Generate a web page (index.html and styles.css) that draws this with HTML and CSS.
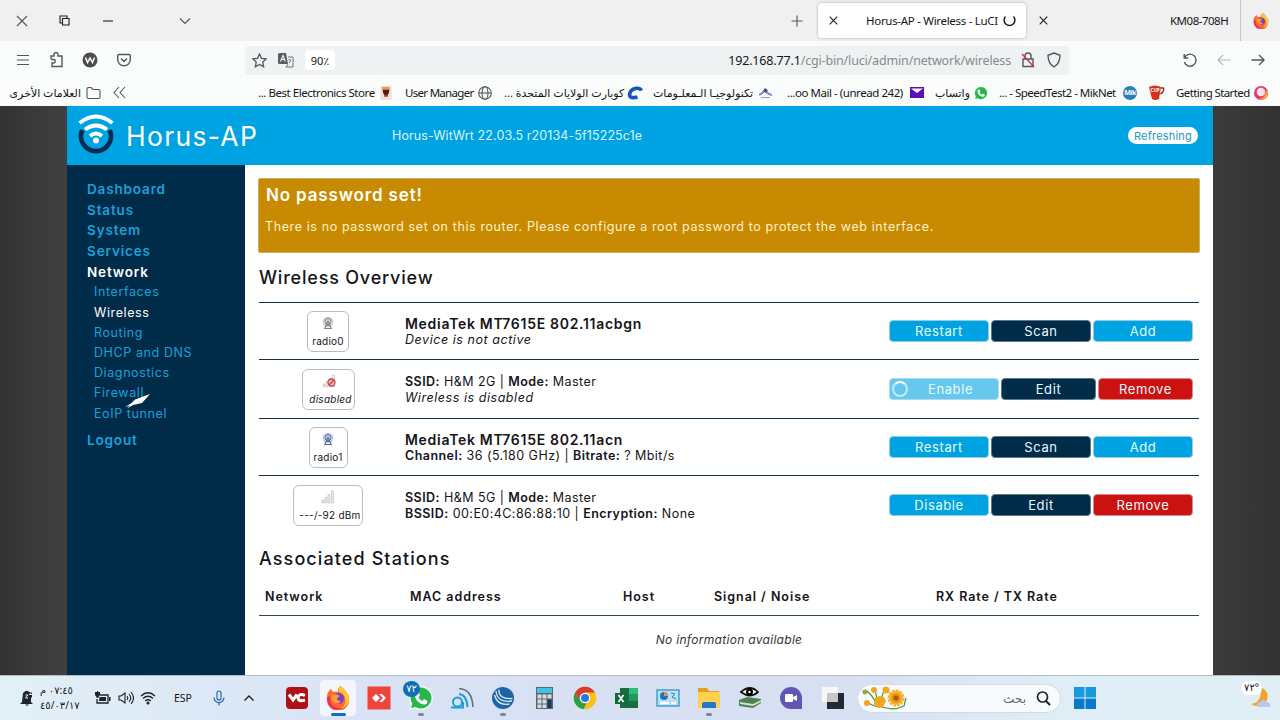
FILE: index.html
```html
<!DOCTYPE html>
<html lang="en">

<head>
  <meta charset="UTF-8">
  <meta name="viewport" content="width=device-width, initial-scale=1.0">
  <title>Horus-AP - Wireless - LuCI</title>
  <link rel="stylesheet" href="styles.css">
</head>

<body>
  <div class="tabs">
    <svg class="line" width="12" height="12" viewBox="0 0 12 12"><path d="M1 1l10 10M11 1L1 11"/></svg>
    <svg class="line dark" width="11" height="11" viewBox="0 0 11 11"><path d="M3 8H1V1h7v2M3.500 3.500h6.500v6.500H3.500z"/></svg>
    <svg class="line dark" width="10" height="10" viewBox="0 0 10 10"><path d="M0 5h10"/></svg>
    <svg class="line" width="12" height="12" viewBox="0 0 12 12"><path d="M1 3.500l5 5 5-5"/></svg>
    <svg class="line" width="12" height="12" viewBox="0 0 12 12"><path d="M6 0.500v11M0.500 6h11"/></svg>
    <div class="tab">
      <svg class="line dark" width="9" height="9" viewBox="0 0 9 9"><path d="M.7.7l7.600 7.600M8.300.7L.7 8.300"/></svg>
      <span class="tab-title">Horus-AP - Wireless - LuCI</span>
      <svg class="line dark" width="13" height="13" viewBox="0 0 13 13"><path stroke-width="1.500" d="M2.500 2.500A5.400 5.400 0 1 0 10.500 2.500"/></svg>
    </div>
    <svg class="line dark" width="9" height="9" viewBox="0 0 9 9"><path d="M.7.7l7.600 7.600M8.300.7L.7 8.300"/></svg>
    <span class="tab-other">KM08-708H</span>
    <i class="tab-line"></i>
    <svg width="16" height="16" viewBox="0 0 24 24"><use href="#firefox"/></svg>
  </div>

  <div class="toolbar">
    <svg class="line" width="14" height="14" viewBox="0 0 14 14"><path d="M1 2.500h12M1 7h12M1 11.500h12"/></svg>
    <svg class="line" width="15" height="16" viewBox="0 0 15 16"><path stroke-width="1.400" d="M2 7V4h3V2.500a1.500 1.500 0 0 1 4 0V4h4v10.500H3V11h1.500a1.600 1.600 0 0 0 0-3.500H2"/></svg>
    <svg width="16" height="16" viewBox="0 0 16 16"><circle cx="8" cy="8" r="7.500" fill="#4b4c4e"/><path d="M3.500 5.500l2 5L8 6l2.500 4.500 2-5" fill="none" stroke="#fff" stroke-width="1.500"/></svg>
    <svg class="line" width="14" height="14" viewBox="0 0 14 14"><path stroke-width="1.400" d="M2 1.500h10q1.300 0 1.300 1.300V6.500a6.200 6.200 0 0 1-12.600 0V2.800Q.7 1.500 2 1.500zM4 5.500l3 3 3-3"/></svg>
    <div class="urlbar">
      <svg class="line" width="15" height="15" viewBox="0 0 15 15"><path stroke-width="1.300" d="M7.500 1l2 4.300 4.700.6-3.400 3.200.8 4.600-4.100-2.200-4.100 2.200.8-4.600L.8 5.900l4.700-.6z"/></svg>
      <svg width="16" height="15" viewBox="0 0 16 15"><path d="M1.500 0H8l2 11H1.500Q0 11 0 9.500v-8Q0 0 1.500 0z" fill="#5b5c60"/><path d="M2.500 8.500L5 2.500l2.300 6M3.500 6.500h3" fill="none" stroke="#eee" stroke-width="1.200"/><path d="M10 4h5v10H8l2-3M10.500 7q2-1.500 2 0t-1 2v1" fill="none" stroke="#74757a"/></svg>
      <span class="zoom">90٪</span>
      <span class="url">192.168.77.1<span class="path">/cgi-bin/luci/admin/network/wireless</span></span>
      <svg class="line" width="14" height="16" viewBox="0 0 14 16"><path stroke-width="1.400" d="M2 7h10v7.500H2zM4 7V4a3 3 0 0 1 6 0v3"/><path class="strike" d="M1 2l12 13"/></svg>
      <svg class="line" width="14" height="16" viewBox="0 0 14 16"><path stroke-width="1.400" d="M7 1l6 2.300c0 5-1 8.700-6 11.700C2 12 1 8.300 1 3.300z"/></svg>
    </div>
    <svg class="line" width="14" height="14" viewBox="0 0 14 14"><path stroke-width="1.400" d="M1.200 1v4h4M1.500 4.800A6 6 0 1 1 1.300 9"/></svg>
    <svg class="line pale" width="14" height="14" viewBox="0 0 14 14"><path d="M13.500 7H1M6 2L1 7l5 5"/></svg>
    <svg class="line" width="14" height="14" viewBox="0 0 14 14"><path stroke-width="1.400" d="M.5 7H13M8 2l5 5-5 5"/></svg>
  </div>

  <div class="bookmarks">
    <span class="mark" dir="rtl">العلامات الأخرى</span>
    <svg class="line" width="15" height="14" viewBox="0 0 15 14"><path d="M1 11V3q0-1.500 1.500-1.500H5l2 2h5.500Q14 3.500 14 5v6q0 1.500-1.500 1.500h-10Q1 12.500 1 11z"/></svg>
    <svg class="line" width="13" height="13" viewBox="0 0 13 13"><path d="M6 1L1 6.500 6 12M12 1L7 6.500l5 5.500"/></svg>
    <div class="mark"><span>... Best Electronics Store</span><svg width="12" height="14" viewBox="0 0 12 15"><path fill="#f0e0d8" d="M0 0h12v15H0z"/><path fill="#e79b52" d="M2 1h8v4H2z"/><path fill="#4b1f1b" d="M2.500 4h7q0 6-3.500 6T2.500 4z"/><path fill="#c43422" d="M4 9.500h4v2H4z"/></svg></div>
    <div class="mark"><span>User Manager</span><svg class="line" width="14" height="14" viewBox="0 0 14 14"><circle cx="7" cy="7" r="6.300"/><ellipse cx="7" cy="7" rx="3" ry="6.300"/><path d="M1 7h12"/></svg></div>
    <div class="mark"><span dir="rtl">كوبارت الولايات المتحدة ...</span><svg width="16" height="14" viewBox="0 0 16 14"><path d="M14.500 4.500Q13 1.800 9 2.300 3 3.500 2.500 9q.5 4 8 2" fill="none" stroke="#1556c0" stroke-width="3.600"/></svg></div>
    <div class="mark"><span dir="rtl">تكنولوجيـا الـمعلـومات</span><svg width="13" height="12" viewBox="0 0 13 12"><path d="M0 8q4-2 6-5 2 4 7 5" fill="none" stroke="#8a84cc" stroke-width="2"/><circle cx="6.500" cy="3.500" r="2" fill="#4f4a91"/><path d="M2 10.500h9" stroke="#9b98d8"/></svg></div>
    <div class="mark"><span>...oo Mail - (unread 242)</span><svg width="14" height="11" viewBox="0 0 14 11"><path fill="#5b10b5" d="M0 0h14v11H0z"/><path fill="#fff" d="M1 1.500h12L7 6z"/></svg></div>
    <div class="mark"><span dir="rtl">واتساب</span><svg width="14" height="14" viewBox="0 0 24 24"><use href="#whatsapp"/></svg></div>
    <div class="mark"><span>... - SpeedTest2 - MikNet</span><span class="mik">Mik</span></div>
    <svg width="16" height="16" viewBox="0 0 16 16"><path fill="#d8301f" d="M0 2q6-3 12 0l-2 12q-4 2-7 0z"/><path fill="none" stroke="#87322c" stroke-width="1.300" d="M12 3h2.500q1 4-3.500 6"/><text x="1.500" y="7" class="cup">CUP</text></svg>
    <div class="mark"><span>Getting Started</span><svg width="14" height="14" viewBox="0 0 14 14"><circle cx="7" cy="7" r="7" fill="#e8366e"/><path fill="#ff9d2e" d="M13 3a7 7 0 0 1-9 10q7 0 9-10z"/><circle cx="7" cy="6" r="4.300" fill="#fbe4ef"/></svg></div>
  </div>

  <div class="page">
    <div class="luci">
      <header class="header">
        <svg width="36" height="44" viewBox="0 0 36 44"><path d="M4.300 16A15 15 0 1 0 31.700 16" fill="none" stroke="#042b4d" stroke-width="4.600"/><g fill="none" stroke="#fff" stroke-width="3.700"><path d="M1.500 9Q18-4 34.500 9M7 15.500q11-8 22 0M12 22q6-5 12 0"/></g><circle cx="18" cy="26.500" r="3" fill="#fff"/></svg>
        <span class="brand">Horus-AP</span>
        <span class="version">Horus-WitWrt 22.03.5 r20134-5f15225c1e</span>
        <span class="refreshing">Refreshing</span>
      </header>
      <div class="columns">
        <nav class="sidebar">
          <a>Dashboard</a>
          <a>Status</a>
          <a>System</a>
          <a>Services</a>
          <a class="active">Network</a>
          <div class="submenu">
            <a>Interfaces</a>
            <a class="active">Wireless</a>
            <a>Routing</a>
            <a>DHCP and DNS</a>
            <a>Diagnostics</a>
            <a>Firewall</a>
            <a>EoIP tunnel</a>
          </div>
          <a>Logout</a>
          <svg class="cursor" width="26" height="18" viewBox="0 0 26 18"><path fill="#fff" d="M25 1L10 6.500 6 10.500 0 14l5-1.500-3 3 6-3.500 9-2z"/></svg>
        </nav>
        <main class="content">
          <div class="alert">
            <h4>No password set!</h4>
            <p>There is no password set on this router. Please configure a root password to protect the web interface.</p>
          </div>
          <h3>Wireless Overview</h3>
          <div class="device">
            <div class="badge radio0"><svg width="14" height="14" viewBox="0 0 14 14"><use href="#radio"/></svg><span>radio0</span></div>
            <div class="info"><b class="name">MediaTek MT7615E 802.11acbgn</b><br><i>Device is not active</i></div>
            <div class="actions"><button>Restart</button><button class="navy">Scan</button><button>Add</button></div>
          </div>
          <div class="device tall">
            <div class="badge disabled"><svg width="14" height="14" viewBox="0 0 14 14"><use href="#bars"/><circle cx="9.500" cy="8.500" r="3.500" fill="#f3b9b4" stroke="#c94545" stroke-width="1.300"/><path stroke="#c94545" stroke-width="1.200" d="M7 11l5-5"/></svg><i>disabled</i></div>
            <div class="info"><b>SSID:</b> H&amp;M 2G | <b>Mode:</b> Master<br><i>Wireless is disabled</i></div>
            <div class="actions busy"><button class="wait"><i class="spinner"></i>Enable</button><button class="navy">Edit</button><button class="red">Remove</button></div>
          </div>
          <div class="device">
            <div class="badge radio1"><svg width="14" height="14" viewBox="0 0 14 14"><use href="#radio"/></svg><span>radio1</span></div>
            <div class="info"><b class="name">MediaTek MT7615E 802.11acn</b><br><b>Channel:</b> 36 (5.180 GHz) | <b>Bitrate:</b> ? Mbit/s</div>
            <div class="actions"><button>Restart</button><button class="navy">Scan</button><button>Add</button></div>
          </div>
          <div class="device tall">
            <div class="badge signal"><svg width="14" height="14" viewBox="0 0 14 14"><use href="#bars"/></svg><span>---/-92 dBm</span></div>
            <div class="info"><b>SSID:</b> H&amp;M 5G | <b>Mode:</b> Master<br><b>BSSID:</b> 00:E0:4C:86:88:10 | <b>Encryption:</b> None</div>
            <div class="actions"><button>Disable</button><button class="navy">Edit</button><button class="red">Remove</button></div>
          </div>
          <h3 class="stations">Associated Stations</h3>
          <div class="thead">
            <b>Network</b>
            <b>MAC address</b>
            <b>Host</b>
            <b>Signal / Noise</b>
            <b>RX Rate / TX Rate</b>
          </div>
          <p class="empty">No information available</p>
        </main>
      </div>
    </div>
  </div>

  <footer class="taskbar">
    <div class="tray">
      <svg width="14" height="16" viewBox="0 0 14 16"><path fill="#1d242c" d="M3 3q4-4 6-1h3v5l-1 1v4l2 2H0l2-2z"/><path fill="#1d242c" d="M5 14.500h4L7 16z"/><path fill="none" stroke="#e5eef5" d="M5.500 5H8L5.500 8H8M9.500 1.500H12l-2.500 3H12"/></svg>
      <div class="clock" dir="rtl"><span>٠٧:٤٥ م</span><span>٤٥/٠٣/١٧</span></div>
      <svg width="16" height="14" viewBox="0 0 16 14"><path fill="none" stroke="#1d242c" stroke-width="1.300" d="M5 4h8v8H2V8"/><path fill="#1d242c" d="M4.500 6H11v4H4zM0 1h2V0h1v1h2v3L3 7H2L0 4zM14 6h1.500v4H14z"/></svg>
      <svg class="line dark" width="16" height="14" viewBox="0 0 16 14"><path d="M1 5v4h2l4 3V2L3 5zM9 5q1.500 2 0 4M11 3q3.500 4 0 8M13 1q5 6 0 12"/></svg>
      <svg class="line dark" width="16" height="14" viewBox="0 0 16 14"><path stroke-width="1.300" d="M1 5q7-6.500 14 0M3 7.500q5-4.500 10 0M5.200 10q2.800-2.500 5.600 0"/><circle cx="8" cy="12" r="1" fill="#222"/></svg>
      <span class="lang">ESP</span>
      <svg class="line mic" width="12" height="16" viewBox="0 0 12 16"><path d="M4 3a2 2 0 0 1 4 0v5a2 2 0 0 1-4 0zM1 7.500a5 5 0 0 0 10 0M6 12.500V15.500"/></svg>
      <svg class="line dark" width="12" height="12" viewBox="0 0 12 12"><path stroke-width="1.400" d="M1.500 8.500L6 4l4.500 4.500"/></svg>
    </div>
    <div class="apps">
      <div class="app"><svg width="24" height="24" viewBox="0 0 24 24"><rect x="1" y="1" width="22" height="22" rx="4" fill="#b01118"/><path d="M4 8.500l4 5.500 4-5.500M20 9.500q-6-3-7 2.500.5 4 7 2" fill="none" stroke="#fff" stroke-width="3"/></svg></div>
      <div class="app current"><svg width="24" height="24" viewBox="0 0 24 24"><use href="#firefox"/></svg></div>
      <div class="app"><svg width="24" height="24" viewBox="0 0 24 24"><path fill="#ef443b" d="M.5.500h23v23H.5z"/><path fill="#fff" d="M9 8l4 4-4 4-4-4zM12 8h3l4 4-4 4h-3l4-4z"/></svg></div>
      <div class="app open"><svg width="24" height="24" viewBox="0 0 24 24"><use href="#whatsapp"/></svg><span class="count">٧٢</span></div>
      <div class="app"><svg width="24" height="24" viewBox="0 0 24 24"><g fill="none" stroke-width="2"><circle cx="7.500" cy="16" r="4.500" stroke="#1ea0d5"/><path stroke="#1ea0d5" d="M1 21.500h12V16M9 8q8 1 8.500 13"/><path stroke="#5e7185" stroke-width="1.600" d="M9 2.500Q22 3 23 21"/></g></svg></div>
      <div class="app open"><svg width="24" height="24" viewBox="0 0 24 24"><circle cx="12" cy="12" r="11" fill="#1d63a5"/><g fill="none" stroke="#d7eaf7" stroke-width="1.300"><path d="M5 5q1 12 16 10M8 3.500q-1 10 13.500 9M3.500 9q3 11 15 9"/></g></svg></div>
      <div class="app"><svg width="24" height="24" viewBox="0 0 24 24"><path fill="#5d6670" d="M4 1h17v22H4z"/><path fill="#3cc4e0" d="M5 2h15v5H5z"/><path fill="#d9dddf" d="M5.500 8.500h4v4h-4zm5 0h4v4h-4zm5 0h4v4h-4zM5.500 13.500h4v4h-4zm5 0h4v4h-4zM5.500 18.500h4v3.500h-4zm5 0h4v3.500h-4z"/><path fill="#143a6a" d="M15.500 13.500h4V22h-4z"/></svg></div>
      <div class="app"><svg width="24" height="24" viewBox="0 0 24 24"><circle cx="12" cy="12" r="11.300" fill="#fbc116"/><path fill="#dc3a2f" d="M2.200 6.400a11.300 11.300 0 0 1 19.600 0H12L7 14z"/><path fill="#2e9c4b" d="M2.200 6.400L8 15l6 1-3.500 7.200A11.300 11.300 0 0 1 2.200 6.400z"/><circle cx="12" cy="12" r="5.300" fill="#fff"/><circle cx="12" cy="12" r="4" fill="#2878dd"/></svg></div>
      <div class="app"><svg width="24" height="24" viewBox="0 0 24 24"><path fill="#176e40" d="M5 2h18v20H5z"/><path fill="#33b877" d="M14 2h9v6h-9z"/><path fill="#1f9a5b" d="M14 8h9v7h-9z"/><path fill="#0d6a39" d="M0 7h12v11H0z"/><path stroke="#fff" stroke-width="1.800" d="M3.500 9l5 7M8.500 9l-5 7"/></svg></div>
      <div class="app"><svg width="24" height="24" viewBox="0 0 24 24"><path fill="#b8e3f7" stroke="#459dce" stroke-width="1.500" d="M1 4h22v16H1z"/><circle cx="8" cy="10" r="4" fill="#1678c8"/><path fill="#ef8b36" d="M8 10V6a4 4 0 0 1 4 4z"/><path d="M4 17h9M15 17h5" stroke="#fff" stroke-width="2"/><path d="M15 7l4 1-3 3 4 2" fill="none" stroke="#2685b6"/></svg></div>
      <div class="app open"><svg width="24" height="24" viewBox="0 0 24 24"><path fill="#e2a319" d="M1 2h9l2 3h10v6H1z"/><path fill="#ffd14c" d="M1 6h22v16H1z"/><path fill="#2477c5" d="M5 22v-4q0-2 2-2h10q2 0 2 2v4z"/></svg></div>
      <div class="app"><svg width="24" height="24" viewBox="0 0 24 24"><path fill="#4b8254" d="M1 14l8-3 14 2v4l-8 5-14-2z"/><path fill="#d2decf" d="M2 16l13 2 8-4v2l-8 4-13-2z"/><path fill="#fff" stroke="#111" stroke-width="1.700" d="M3 6q9-8 17 0-8 7-17 0z"/><circle cx="11.500" cy="6" r="3.500"/><circle cx="11.500" cy="6" r="1.200" fill="#fff"/></svg></div>
      <div class="app"><svg width="24" height="24" viewBox="0 0 24 24"><path fill="#6256b5" d="M12 1a11 11 0 0 1 11 11v11H12a11 11 0 0 1 0-22z"/><rect x="6" y="8" width="8" height="8" rx="1" fill="#fff"/><path fill="#fff" d="M14 11l4-2v6l-4-2z"/></svg></div>
      <div class="app"><svg width="24" height="24" viewBox="0 0 24 24"><path fill="#222a30" d="M6 7h17v16H6z"/><path fill="#f6f7f6" d="M1 1h16v15H1z"/><path fill="#c5c8c8" d="M6 7h11v9H6z"/></svg></div>
    </div>
    <div class="search">
      <svg width="46" height="24" viewBox="0 0 46 24"><g fill="none" stroke="#53903b" stroke-width="1.200"><path d="M5 5q6 5 10 14M13 3l3 15M23 3l-6 14M5 16q7 5 15 5 12 4 22-1l2-8"/></g><g fill="#f2a51e"><circle cx="12" cy="4" r="3"/><circle cx="24" cy="4" r="3.500"/><circle cx="5" cy="17" r="3"/><path d="M13 12l4-2 5 1 2 4-3 6-5 1-4-4z"/></g><circle cx="3" cy="6" r="2.500" fill="#8aac35"/><circle cx="34" cy="12" r="6.500" fill="#eb9010" stroke="#f6b728" stroke-width="4" stroke-dasharray="2.500 .8"/><circle cx="34" cy="12" r="2.500" fill="#a85a14"/></svg>
      <span dir="rtl">بحث</span>
      <svg class="line dark" width="15" height="15" viewBox="0 0 15 15"><circle cx="6.500" cy="6" r="5" stroke-width="1.700"/><path stroke-width="2" d="M10 10l4 4"/></svg>
    </div>
    <svg class="start" width="22" height="22" viewBox="0 0 22 22"><path fill="#159ce0" d="M0 0h10.500v10.500H0zM11.500 0H22v10.500H11.500z"/><path fill="#0879cb" d="M0 11.500h10.500V22H0zM11.500 11.500H22V22H11.500z"/></svg>
    <div class="weather"><svg width="24" height="24" viewBox="0 0 24 24"><path fill="#f3a42c" d="M14 1q9 5 6 13-6 10-16 4Q15 17 14 1z"/><path fill="#b5c9ec" d="M11 21q-3-4 2-5 3-5 6 0 5 0 4 5z"/></svg><bdo class="temp" dir="ltr">٧٢°</bdo></div>
  </footer>

  <!-- shared icons -->
  <svg width="0" height="0" class="defs">
    <symbol id="firefox" viewBox="0 0 24 24"><path fill="#ff6b2c" d="M14 0q5 3 6 6 4 4 3 8a11 11 0 0 1-22 0Q0 7 5 3l2 3q3-1 5 0 0-4 2-6z"/><path fill="#ffc62e" d="M14 0q5 3 6 6 4 4 3 8-2 7-7 8 5-5 3-11-2-4-6-5-1-3 1-6z"/><path fill="#ec2d63" d="M1 12q0 7 5 10 5 3 10 0-8 1-11-5-2-5 0-8z"/><circle cx="12.500" cy="12.500" r="5.500" fill="#7542cf"/><path fill="#ff9931" d="M5 9q5-2 9 1l-3 2q0 3 4 3-2 4-6 2-4-3-4-8z"/></symbol>
    <symbol id="whatsapp" viewBox="0 0 24 24"><path fill="#eefaf0" d="M12 0a12 12 0 1 1-6 22.400L0 24l1.700-6A12 12 0 0 1 12 0z"/><path fill="#26b84b" d="M12 1.500A10.500 10.500 0 1 1 6.500 21L2 22l1.300-4.300A10.500 10.500 0 0 1 12 1.500z"/><path fill="#fff" d="M7 6h2.500L11 9.500l-1.500 2q1.500 2.500 4 3.500l1.500-2 3.500 2q0 4-4 3.500Q7 16.500 6 10q-.3-3 1-4z"/></symbol>
    <symbol id="bars" viewBox="0 0 14 14"><path fill="#ececec" stroke="#c4c4c4" stroke-width=".7" d="M1 10h2v3H1zM4 7.500h2V13H4zM7 4.500h2V13H7zM10.500 1h2v12h-2z"/></symbol>
    <symbol id="radio" viewBox="0 0 14 14"><circle cx="7" cy="6" r="5.500" fill="currentColor" opacity=".35"/><circle cx="7" cy="5.500" r="3" fill="none" stroke="currentColor"/><path fill="none" stroke="currentColor" stroke-width="1.100" d="M7 5L4 12M7 5l3 7M3 12.500h8M5 9.500h4"/></symbol>
  </svg>
</body>

</html>
```
FILE: styles.css
```css
body {
  width: 1280px;
  height: 720px;
  margin: 0;
  overflow: hidden;
  display: flex;
  flex-direction: column;
  background: #f9fcfb;
  color: #15141a;
  font-family: "Noto Sans", "DejaVu Sans", sans-serif;
  font-size: 12px;
}

* {
  box-sizing: border-box;
}

svg {
  display: block;
  flex: none;
}

.defs {
  position: absolute;
}

.line {
  fill: none;
  stroke: #55565b;
  stroke-width: 1.1;
}

.dark {
  stroke: #1e1e22;
}

.pale {
  stroke: #b5b7b9;
}

.strike {
  stroke: #d42a5b;
  stroke-width: 1.3;
}

.mic {
  stroke: #1f5aa8;
}

/* browser */
.tabs,
.toolbar,
.bookmarks {
  display: grid;
  flex: none;
  align-items: center;
  white-space: nowrap;
  padding-left: 16px;
}

.tabs {
  height: 41px;
  background: #f0f0f0;
  grid-template-columns: 43px 44px 76px 612px 27px 221px 131px 70px 13px 16px;
}

.tab {
  width: 208px;
  height: 35px;
  display: flex;
  align-items: center;
  padding: 0 9px 0 11px;
  background: #fff;
  border-radius: 4px;
  box-shadow: 0 0 3px #aaa;
}

.tab-title {
  margin-left: 28px;
  width: 137px;
  font-size: 11.5px;
  letter-spacing: -0.3px;
}

.tab-other {
  font-size: 11.5px;
  letter-spacing: -0.5px;
}

.tab-line {
  width: 1px;
  height: 41px;
  background: #c4c4c6;
}

.toolbar {
  height: 38px;
  grid-template-columns: 33px 33px 35px 128px 938px 34px 34px 14px;
}

.urlbar {
  display: flex;
  align-items: center;
  width: 824px;
  height: 29px;
  padding: 0 8px 0 7px;
  background: #eff2f3;
  border-radius: 4px;
}

.zoom {
  width: 30px;
  height: 20px;
  margin-left: 11px;
  background: #fff;
  border-radius: 4px;
  font-size: 11px;
  line-height: 22px;
  text-align: center;
  letter-spacing: -0.5px;
}

.urlbar svg + svg {
  margin-left: 11px;
}

.url {
  margin-left: auto;
  margin-right: 10px;
  padding-top: 1px;
  font-size: 12.5px;
  letter-spacing: -0.16px;
}

.path {
  color: #88898d;
}

.urlbar .url ~ svg + svg {
  margin-left: 12px;
}

.bookmarks {
  height: 27px;
  padding-left: 11px;
  grid-template-columns: 75px 27px 145px 147px 99px 149px 134px 148px 64px 150px 27px 92px;
}

.mark {
  display: flex;
  align-items: center;
  justify-content: space-between;
  font-size: 11.5px;
  letter-spacing: -0.45px;
}

.mark [dir],
.mark[dir] {
  font-size: 11px;
  letter-spacing: 0;
}

span.mark {
  width: 70px;
}

.mark:nth-child(4) { width: 134px; }
.mark:nth-child(5) { width: 87px; letter-spacing: -0.7px; }
.mark:nth-child(6) { width: 139px; }
.mark:nth-child(7) { width: 119px; }
.mark:nth-child(8) { width: 137px; }
.mark:nth-child(9) { width: 53px; }
.mark:nth-child(10) { width: 138px; letter-spacing: -0.5px; }
.mark:nth-child(12) { letter-spacing: -0.6px; }

.mik {
  width: 14px;
  height: 14px;
  flex: none;
  border-radius: 50%;
  background: #287fb9;
  color: #fff;
  font-size: 7px;
  font-weight: bold;
  line-height: 14px;
  text-align: center;
}

.cup {
  fill: #fff;
  font-size: 4.5px;
  font-weight: bold;
}

/* router page */
.page {
  flex: none;
  height: 569px;
  padding: 0 67px;
  background: linear-gradient(90deg, #323232, #404040 5%, #3b3b3b 95%, #323232);
}

.luci {
  height: 100%;
  background: #fff;
  font-family: Inter, "DejaVu Sans", sans-serif;
  letter-spacing: 0.2px;
}

.header {
  display: flex;
  align-items: center;
  height: 59px;
  padding: 0 15px 0 11px;
  background: #00a3e1;
  color: #fff;
}

.brand {
  width: 266px;
  margin-left: 12px;
  font-size: 26.5px;
  letter-spacing: 1.3px;
}

.version {
  color: #d9f6ff;
  font-size: 12.5px;
  letter-spacing: 0.1px;
}

.refreshing {
  margin-left: auto;
  width: 70px;
  height: 17px;
  border-radius: 9px;
  background: #fff;
  color: #2198c6;
  font-size: 11px;
  line-height: 18px;
  text-align: center;
}

.columns {
  display: flex;
  height: 510px;
}

.sidebar {
  position: relative;
  width: 178px;
  padding: 13px 0 0 20px;
  background: #002b49;
  color: #1ba0d8;
}

.sidebar a {
  display: block;
  height: 20.7px;
  line-height: 22px;
  font-size: 13.5px;
  font-weight: 600;
  letter-spacing: 0.85px;
}

.submenu {
  padding: 0 0 6px 7px;
}

.submenu a {
  height: 20.2px;
  line-height: 22px;
  font-size: 12.5px;
  font-weight: 400;
  letter-spacing: 0.6px;
}

.sidebar .active {
  color: #fff;
}

.cursor {
  position: absolute;
  left: 58px;
  top: 228px;
}

.content {
  flex: 1;
  padding: 13px 14px 0 13px;
}

.alert {
  height: 75px;
  padding: 6px 7px 0 6px;
  margin-right: -1px;
  border: 1px solid #cfae62;
  border-radius: 2px;
  background: #c88a00;
  color: #fff;
}

.alert h4 {
  margin: 0 0 0 1px;
  font-size: 17px;
  font-weight: 600;
  line-height: 20px;
  letter-spacing: 0.85px;
}

.alert p {
  margin: 13px 0 0;
  color: #fff1cd;
  font-size: 12.5px;
  line-height: 18px;
  letter-spacing: 0.61px;
  white-space: nowrap;
}

h3 {
  height: 49px;
  margin: 0 0 0 1px;
  font-size: 18px;
  font-weight: 500;
  line-height: 50px;
  letter-spacing: 0.8px;
}

.device {
  display: grid;
  grid-template-columns: 138px 1fr 304px;
  align-items: center;
  height: 57px;
  margin-left: 1px;
  padding-right: 6px;
  border-top: 1px solid #123047;
}

.device.tall {
  height: 59px;
}

.badge {
  justify-self: center;
  display: flex;
  flex-direction: column;
  align-items: center;
  height: 41px;
  padding-top: 4px;
  border: 1px solid #b9bdc0;
  border-radius: 6px;
  font-size: 10px;
  line-height: 13px;
  white-space: nowrap;
  letter-spacing: 0.25px;
}

.badge span,
.badge i {
  margin-top: 5px;
}

.radio0 { width: 42px; }
.radio1 { width: 39px; }
.disabled { width: 53px; padding-left: 5px; }
.signal { width: 70px; padding-left: 4px; }
.radio0 svg { color: #858585; }
.radio1 svg { color: #5572a8; }
.disabled svg,
.signal svg {
  margin-left: -4px;
}

.info {
  padding: 1px 0 0 8px;
  font-size: 12.5px;
  line-height: 15.5px;
  letter-spacing: 0.45px;
  white-space: nowrap;
}

.info i {
  letter-spacing: 0.55px;
}

.info b {
  font-weight: 600;
}

.info .name {
  font-size: 14px;
  letter-spacing: 0.7px;
}

.actions {
  display: grid;
  grid-template-columns: 100px 100px 100px;
  gap: 2px;
}

.busy {
  grid-template-columns: 110px 95px 95px;
}

button {
  display: flex;
  align-items: center;
  justify-content: center;
  height: 22px;
  padding: 0;
  border: 1px solid #95cce1;
  border-radius: 4px;
  background: #00a3e1;
  color: #e8fbff;
  font: inherit;
  font-size: 13px;
  letter-spacing: 0.6px;
}

.navy {
  background: #002b49;
  border-color: #60798a;
}

.red {
  background: #cc1111;
  border-color: #d98989;
}

.wait {
  justify-content: flex-start;
  padding-left: 2px;
  background: #66c8ed;
  border-color: #a9dcee;
}

.spinner {
  width: 16px;
  height: 16px;
  margin-right: 20px;
  border: 2px solid #c2ebf9;
  border-top-color: #fff;
  border-radius: 50%;
}

.stations {
  height: 44px;
  line-height: 50px;
  letter-spacing: 1.1px;
}

.thead {
  display: grid;
  grid-template-columns: 145px 213px 91px 222px 1fr;
  height: 38px;
  margin-left: 1px;
  padding-left: 6px;
  border-bottom: 1px solid #28465a;
  font-size: 12.5px;
  line-height: 38px;
  letter-spacing: 0.95px;
}

.thead b {
  font-weight: 600;
}

.empty {
  margin: 0;
  padding-left: 1px;
  color: #333;
  font-size: 12px;
  font-style: italic;
  line-height: 48px;
  letter-spacing: 0.3px;
  text-align: center;
}

/* windows taskbar */
.taskbar {
  display: flex;
  align-items: center;
  flex: none;
  height: 45px;
  border-top: 1px solid #b3bcc5;
  background: linear-gradient(90deg, #e2f0f7, #d9e3f5 28%, #d7dff3 65%, #dfedf6 82%, #e1eef6);
}

.tray {
  display: grid;
  grid-template-columns: 20px 55px 23px 22px 34px 39px 30px 33.5px;
  align-items: center;
  padding-left: 20px;
}

.clock {
  width: 41px;
  font-size: 10px;
  line-height: 15px;
  white-space: nowrap;
}

.clock span {
  display: block;
  text-align: left;
}

.lang {
  font-size: 10.5px;
}

.apps {
  display: flex;
}

.app {
  position: relative;
  display: flex;
  align-items: center;
  justify-content: center;
  width: 41.2px;
  height: 36px;
}

.current {
  width: 36px;
  margin: 0 2.6px;
  background: #f3f6fc;
  border-radius: 4px;
}

.open::after,
.current::after {
  content: "";
  position: absolute;
  bottom: 0;
  width: 6px;
  height: 3px;
  border-radius: 2px;
  background: #818791;
}

.current::after {
  width: 15px;
  background: #0c70bd;
}

.count {
  position: absolute;
  left: 3px;
  top: 1px;
  width: 17px;
  height: 16px;
  border-radius: 50%;
  background: #0f6eb8;
  color: #fff;
  font-size: 10px;
  line-height: 15px;
  text-align: center;
}

.search {
  display: flex;
  align-items: center;
  width: 204px;
  height: 29px;
  margin-left: 4px;
  padding: 0 9px 0 4px;
  border: 1px solid #d4dae5;
  border-radius: 15px;
  background: #f8fbfd;
  color: #666;
}

.search span {
  margin-left: auto;
  margin-right: 10px;
}

.start {
  margin-left: 13px;
}

.weather {
  position: relative;
  margin-left: 151px;
}

.temp {
  position: absolute;
  left: -6px;
  top: -5px;
  width: 21px;
  height: 14px;
  border-radius: 8px;
  background: #fff;
  font-size: 10px;
  line-height: 13px;
  text-align: center;
}
```
